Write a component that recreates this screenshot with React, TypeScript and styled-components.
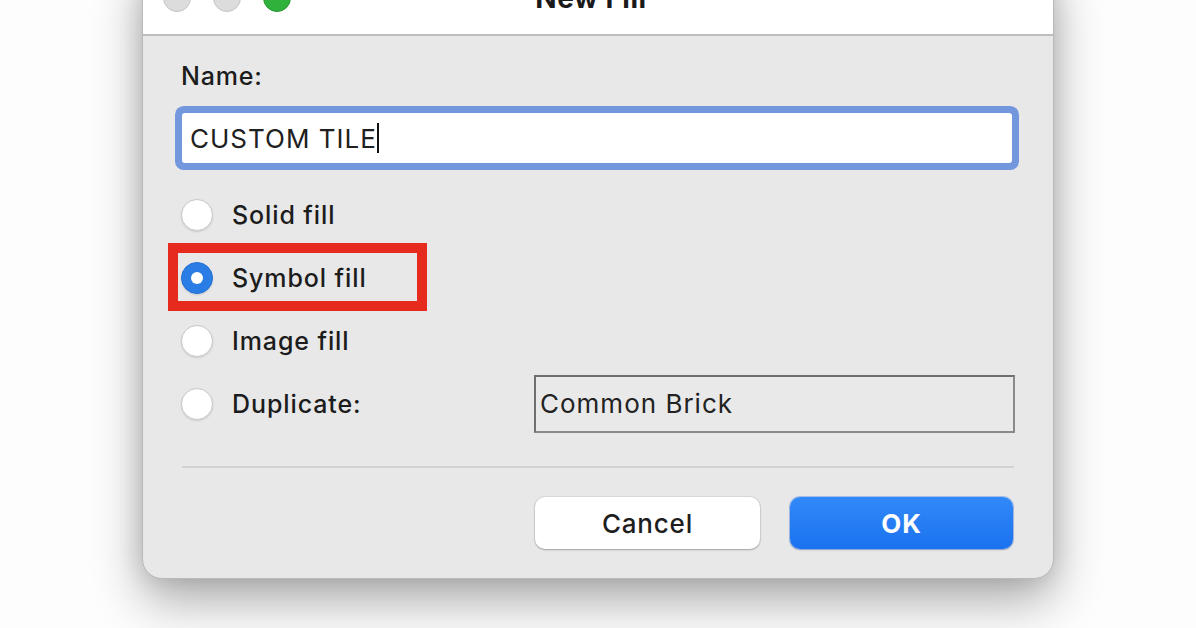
import React, { useState } from 'react';
import styled, { createGlobalStyle } from 'styled-components';

const GlobalStyle = createGlobalStyle`
  html, body {
    margin: 0;
    padding: 0;
    background: #fdfdfd;
    overflow: hidden;
  }
  * {
    box-sizing: border-box;
  }
`;

const Page = styled.div`
  width: 1196px;
  height: 628px;
  overflow: hidden;
  background: #fdfdfd;
  font-family: Inter, 'Liberation Sans', sans-serif;
  color: #1c1c1c;
`;

const Window = styled.div`
  width: 912px;
  margin-left: 142px;
  margin-top: -37px;
  border: 1px solid #b9b9b9;
  border-radius: 0 0 20px 20px;
  background: #e8e8e8;
  box-shadow: 0 22px 50px rgba(0, 0, 0, 0.32), 0 0 24px rgba(0, 0, 0, 0.12);
  overflow: hidden;
`;

const TitleBar = styled.div`
  position: relative;
  height: 72px;
  display: flex;
  align-items: center;
  justify-content: center;
  background: #ffffff;
  border-bottom: 2px solid #bdbdbd;
`;

const Lights = styled.div`
  position: absolute;
  left: 20px;
  top: 0;
  bottom: 2px;
  display: flex;
  align-items: center;
  gap: 22px;
`;

const Light = styled.span<{ $color: string; $edge: string }>`
  width: 28px;
  height: 28px;
  border-radius: 50%;
  background: ${(p) => p.$color};
  border: 1px solid ${(p) => p.$edge};
`;

const Title = styled.div`
  font-size: 28px;
  font-weight: 700;
  letter-spacing: 0.5px;
  color: #1a1a1a;
  margin-left: -14px;
  margin-bottom: 2px;
`;

const Body = styled.div`
  display: flex;
  flex-direction: column;
  padding: 25px 38px 29px 38px;
`;

const Label = styled.div`
  font-size: 25px;
  font-weight: 500;
  line-height: 30px;
  letter-spacing: 0.8px;
`;

const NameInput = styled.div`
  margin: 22px 3px 0 1px;
  height: 50px;
  display: flex;
  align-items: center;
  padding-left: 8px;
  background: #ffffff;
  border-radius: 3px;
  box-shadow: 0 0 0 7px #7397dc;
  font-size: 26px;
  letter-spacing: 1px;
  color: #202020;
`;

const Caret = styled.span`
  display: inline-block;
  width: 2px;
  height: 30px;
  margin-left: 0;
  background: #111;
`;

const Options = styled.div`
  display: flex;
  flex-direction: column;
  margin-top: 20px;
`;

const Row = styled.label`
  position: relative;
  height: 63px;
  display: flex;
  align-items: center;
  gap: 19px;
  font-size: 25px;
  font-weight: 500;
  letter-spacing: 0.9px;
  cursor: pointer;
`;

const Radio = styled.span<{ $checked: boolean }>`
  position: relative;
  flex: none;
  width: 32px;
  height: 32px;
  border-radius: 50%;
  background: ${(p) => (p.$checked ? '#2b7de6' : '#ffffff')};
  border: 1px solid ${(p) => (p.$checked ? '#2471d6' : '#c9c9c9')};
  box-shadow: 0 1px 2px rgba(0, 0, 0, 0.12);
  display: flex;
  align-items: center;
  justify-content: center;

  &::after {
    content: '';
    display: ${(p) => (p.$checked ? 'block' : 'none')};
    width: 12px;
    height: 12px;
    border-radius: 50%;
    background: #ffffff;
  }
`;

const Highlight = styled.span`
  position: absolute;
  left: -13px;
  top: -3px;
  width: 259px;
  height: 68px;
  border: 10px solid #e62a1e;
  pointer-events: none;
`;

const Field = styled.div`
  margin-left: auto;
  width: 481px;
  height: 58px;
  display: flex;
  align-items: center;
  padding-left: 4px;
  border: 2px solid #6f6f6f;
  border-right-color: #8a8a8a;
  border-bottom-color: #8a8a8a;
  background: #e9e9e9;
  font-size: 26px;
  font-weight: 400;
  letter-spacing: 1px;
  color: #222;
`;

const Divider = styled.div`
  height: 2px;
  margin: 31px 1px 0 1px;
  background: #d2d2d2;
`;

const Buttons = styled.div`
  display: flex;
  justify-content: flex-end;
  gap: 30px;
  margin: 29px 2px 0 0;
`;

const Button = styled.button<{ $primary?: boolean }>`
  width: ${(p) => (p.$primary ? '223px' : '225px')};
  height: 52px;
  border-radius: 10px;
  border: none;
  font-family: Inter, 'Liberation Sans', sans-serif;
  font-size: 26px;
  letter-spacing: 0.8px;
  font-weight: ${(p) => (p.$primary ? 700 : 500)};
  color: ${(p) => (p.$primary ? '#ffffff' : '#1e1e1e')};
  background: ${(p) =>
    p.$primary ? 'linear-gradient(#3189f8, #1b72ef)' : '#ffffff'};
  box-shadow: ${(p) =>
    p.$primary
      ? '0 0 0 1px rgba(40, 110, 230, 0.35), 0 1px 2px rgba(0, 0, 0, 0.2)'
      : '0 0 0 1px rgba(0, 0, 0, 0.06), 0 1px 2px rgba(0, 0, 0, 0.25)'};
  cursor: pointer;
`;

const options = ['Solid fill', 'Symbol fill', 'Image fill', 'Duplicate:'];

const App: React.FC = () => {
  const [choice, setChoice] = useState('Symbol fill');

  return (
    <Page>
      <GlobalStyle />
      <Window>
        <TitleBar>
          <Lights>
            <Light $color="#dcdcdc" $edge="#c4c4c4" />
            <Light $color="#dcdcdc" $edge="#c4c4c4" />
            <Light $color="#2fb13c" $edge="#24962f" />
          </Lights>
          <Title>New Fill</Title>
        </TitleBar>
        <Body>
          <Label>Name:</Label>
          <NameInput>
            CUSTOM TILE
            <Caret />
          </NameInput>
          <Options>
            {options.map((opt) => (
              <Row key={opt} onClick={() => setChoice(opt)}>
                <Radio $checked={choice === opt} />
                {opt}
                {opt === 'Symbol fill' && <Highlight />}
                {opt === 'Duplicate:' && <Field>Common Brick</Field>}
              </Row>
            ))}
          </Options>
          <Divider />
          <Buttons>
            <Button>Cancel</Button>
            <Button $primary>OK</Button>
          </Buttons>
        </Body>
      </Window>
    </Page>
  );
};

export default App;
